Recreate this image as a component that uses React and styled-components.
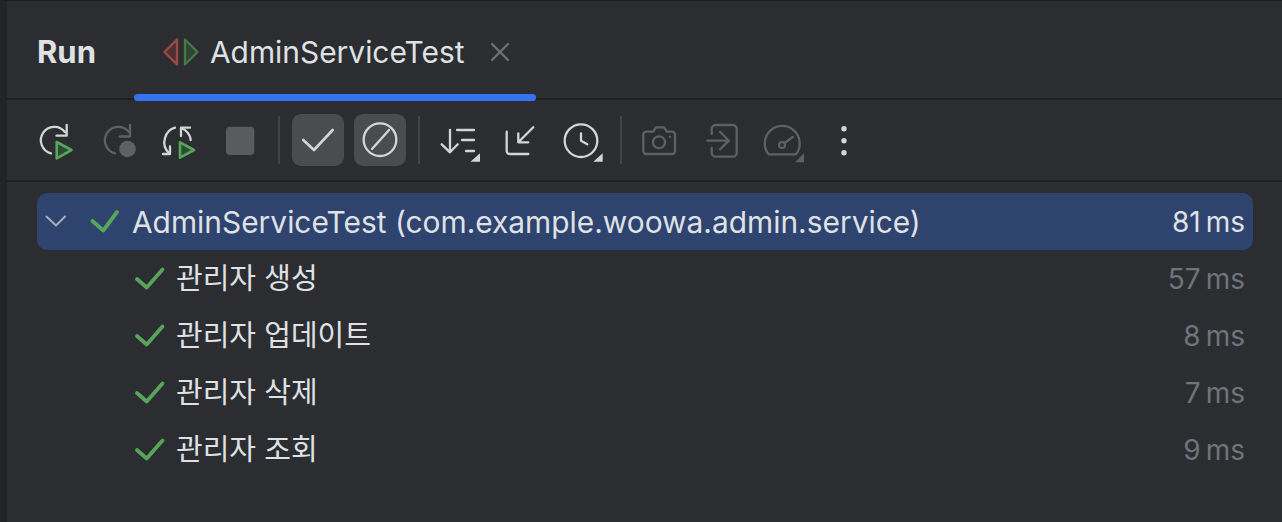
import styled, { createGlobalStyle } from 'styled-components';

const Global = createGlobalStyle`
  html, body { margin: 0; padding: 0; background: #2b2d30; }
`

const Panel = styled.div`
  width: 1282px;
  height: 522px;
  box-sizing: border-box;
  overflow: hidden;
  background: #2b2d30;
  border-left: 7px solid #232427;
  border-top: 1px solid #1e1f22;
  font-family: Inter, "Noto Sans CJK KR", sans-serif;
  color: #dfe1e5;
`

const TabBar = styled.div`
  display: flex;
  height: 99px;
  box-sizing: border-box;
  padding-left: 30px;
  border-bottom: 2px solid #1e1f22;
`

const RunLabel = styled.div`
  width: 97px;
  font-size: 31px;
  font-weight: 700;
  line-height: 102px;
`

const Tab = styled.div`
  position: relative;
  display: flex;
  align-items: center;
  width: 402px;
  height: 102px;
`

const TabTitle = styled.span`
  font-size: 29.9px;
  width: 253px;
  white-space: nowrap;
`

const TabLine = styled.div`
  position: absolute;
  left: 0;
  right: 0;
  top: 93px;
  height: 7px;
  border-radius: 4px;
  background: #3574f0;
`

const Toolbar = styled.div`
  display: flex;
  align-items: center;
  height: 82px;
  box-sizing: border-box;
  padding-left: 26px;
  border-bottom: 2px solid #1e1f22;
`

const Divider = styled.div`
  width: 2px;
  height: 48px;
  background: #414345;
`

const ToggleRow = styled.div`
  display: flex;
  gap: 10px;
  margin: 0 12px;
`

const Toggle = styled.div`
  display: flex;
  width: 52px;
  height: 52px;
  border-radius: 9px;
  background: #4b4c50;
`

const Tree = styled.div`
  display: flex;
  flex-direction: column;
  padding: 11px 29px 0 30px;
`

const Row = styled.div`
  display: flex;
  align-items: center;
  height: 57px;
  border-radius: 10px;
  background: ${p => p.$selected ? '#2e436e' : 'transparent'};
  padding-right: 8px;
`

const RowName = styled.span`
  flex: 1;
  font-size: ${p => p.$korean ? '29px' : '29.9px'};
  line-height: 60px;
  white-space: nowrap;
`

const Duration = styled.span`
  display: flex;
  gap: 5px;
  font-size: 28px;
  line-height: 60px;
  color: ${p => p.$selected ? '#dfe1e5' : '#6f737a'};
`

const TestIndent = styled.div`
  display: flex;
  align-items: center;
  width: 139px;
  flex: none;
`

const white = '#d3d5d9'
const grey = '#5f6064'
const green = '#57a55a'

// viewBox is in page pixels, so the shapes read straight off the reference
function Icon ({ x, w, y = 100, h = 80, children }) {
  return (
    <svg width={w} height={h} viewBox={`${x} ${y} ${w} ${h}`} fill="none" strokeLinecap="round" strokeLinejoin="round" style={{ display: 'block', flex: 'none' }}>
      {children}
    </svg>
  )
}

const Play = ({ d }) => <path d={d} fill="#2d4a32" stroke={green} strokeWidth="2.6" />

function Corner ({ d }) {
  return <path d={d} fill={white} stroke="none" />
}

function Rerun () {
  return (
    <Icon x={33} w={60}>
      <path d="M65 132 A13.5 13.5 0 1 0 51 153.4" stroke={white} strokeWidth="2.3" />
      <path d="M56.5 135.7H66.7V125" stroke={white} strokeWidth="2.3" />
      <Play d="M56.7 142 L71.5 150 L56.7 158.3Z" />
    </Icon>
  )
}

function RerunStopped () {
  return (
    <Icon x={93} w={60}>
      <path d="M129 132 A13.5 13.5 0 1 0 115 153.4" stroke={grey} strokeWidth="2.3" />
      <path d="M119.5 136.5H130V125" stroke={grey} strokeWidth="2.3" />
      <circle cx="127.5" cy="149" r="8.3" fill={grey} />
    </Icon>
  )
}

function RerunFailed () {
  return (
    <Icon x={153} w={60}>
      <path d="M175 127.7 C165.5 130 159.5 145 169.5 153.5" stroke={white} strokeWidth="2.3" />
      <path d="M163 154H170V146.5" stroke={white} strokeWidth="2.3" />
      <path d="M190 127.7H181V136" stroke={white} strokeWidth="2.3" />
      <path d="M181.5 128 C186 130 190 134 190.7 140" stroke={white} strokeWidth="2.3" />
      <Play d="M180 142.3 L194 150 L180 157.7Z" />
    </Icon>
  )
}

function Stop () {
  return (
    <Icon x={213} w={65}>
      <rect x="226" y="126.7" width="28.3" height="28.3" rx="4" fill="#5a5b5e" />
    </Icon>
  )
}

function SortIcon () {
  return (
    <Icon x={420} w={70}>
      <path d="M450 130V151.5M441.7 144.3L450 152.3L457.7 144.3" stroke={white} strokeWidth="2.3" />
      <path d="M457 130H474M462 140H474M466 151H474" stroke={white} strokeWidth="2.3" />
      <Corner d="M480 153.3V161.7H470.5Z" />
    </Icon>
  )
}

function CollapseIcon () {
  return (
    <Icon x={490} w={60}>
      <path d="M506.7 131.7V151A3 3 0 0 0 509.7 154H528.3" stroke={white} strokeWidth="2.3" />
      <path d="M533.3 127.3L518.3 142.3M518.3 133.3V142.3H528.3" stroke={white} strokeWidth="2.3" />
    </Icon>
  )
}

function ClockIcon () {
  return (
    <Icon x={550} w={70}>
      <circle cx="581" cy="140.7" r="16.3" stroke={white} strokeWidth="2.3" />
      <path d="M581 133.3V140.7L587.3 144.3" stroke={white} strokeWidth="2.3" />
      <Corner d="M602.7 153.3V161.7H593.3Z" />
    </Icon>
  )
}

function CameraIcon () {
  return (
    <Icon x={622} w={70}>
      <path d="M653.3 131.7L655 128.5A2 2 0 0 1 656.8 127.3H663.2A2 2 0 0 1 665 128.5L666.7 131.7H672A3 3 0 0 1 675 134.7V151A3 3 0 0 1 672 154H646.3A3 3 0 0 1 643.3 151V134.7A3 3 0 0 1 646.3 131.7Z" stroke={grey} strokeWidth="2.3" />
      <circle cx="659" cy="142.3" r="6" stroke={grey} strokeWidth="2.3" />
      <circle cx="670" cy="136.7" r="1.2" fill={grey} />
    </Icon>
  )
}

function EnterIcon () {
  return (
    <Icon x={692} w={60}>
      <path d="M711.7 134V129A4 4 0 0 1 715.7 125H732.7A4 4 0 0 1 736.7 129V152.7A4 4 0 0 1 732.7 156.7H715.7A4 4 0 0 1 711.7 152.7V148" stroke={grey} strokeWidth="2.3" />
      <path d="M707.3 140.7H728M720 131.7L729 140.7L720 149.3" stroke={grey} strokeWidth="2.3" />
    </Icon>
  )
}

function GaugeIcon () {
  return (
    <Icon x={752} w={68}>
      <path d="M768.5 154.3A17.5 17.5 0 1 1 796 154.3Z" stroke={grey} strokeWidth="2.3" />
      <circle cx="782" cy="145" r="3" stroke={grey} strokeWidth="2.2" />
      <path d="M784.5 143L792.7 137" stroke={grey} strokeWidth="2.3" />
      <path d="M804 153.3V162.3H795Z" fill={grey} />
    </Icon>
  )
}

function MoreIcon () {
  return (
    <Icon x={820} w={50}>
      <circle cx="844" cy="128.7" r="2.7" fill={white} />
      <circle cx="844" cy="140.7" r="2.7" fill={white} />
      <circle cx="844" cy="152.7" r="2.7" fill={white} />
    </Icon>
  )
}

const tests = [
  { name: '관리자 생성', ms: 57 },
  { name: '관리자 업데이트', ms: 8 },
  { name: '관리자 삭제', ms: 7 },
  { name: '관리자 조회', ms: 9 },
]

export default function App () {
  return (
    <>
      <Global />
      <Panel>
        <TabBar>
          <RunLabel>Run</RunLabel>
          <Tab>
            <svg width="76" height="40" viewBox="134 31 76 40" fill="none" style={{ flex: 'none' }}>
              <path d="M177 38.5L164.5 51L177 63.5Z" fill="#4d2f2f" stroke="#9c4a47" strokeWidth="2.4" strokeLinejoin="round" />
              <path d="M185 38.5L197.5 51L185 63.5Z" fill="#2f4433" stroke="#47764a" strokeWidth="2.4" strokeLinejoin="round" />
            </svg>
            <TabTitle>AdminServiceTest</TabTitle>
            <svg width="28" height="28" viewBox="0 0 28 28" fill="none" style={{ marginLeft: 23 }}>
              <path d="M6 6L22 22M22 6L6 22" stroke="#6f7072" strokeWidth="2.4" strokeLinecap="round" />
            </svg>
            <TabLine />
          </Tab>
        </TabBar>
        <Toolbar>
          <Rerun />
          <RerunStopped />
          <RerunFailed />
          <Stop />
          <Divider />
          <ToggleRow>
            <Toggle>
              <Icon x={292} w={52} y={115} h={52}>
                <path d="M303.3 141L314 151L332.7 131" stroke={white} strokeWidth="2.6" />
              </Icon>
            </Toggle>
            <Toggle>
              <Icon x={354} w={52} y={115} h={52}>
                <circle cx="380" cy="140.7" r="16.3" stroke={white} strokeWidth="2.3" />
                <path d="M372 150L389 131" stroke={white} strokeWidth="2.3" />
              </Icon>
            </Toggle>
          </ToggleRow>
          <Divider />
          <SortIcon />
          <CollapseIcon />
          <ClockIcon />
          <Divider />
          <CameraIcon />
          <EnterIcon />
          <GaugeIcon />
          <MoreIcon />
        </Toolbar>
        <Tree>
          <Row $selected>
            <svg width="95" height="40" viewBox="37 203 95 40" fill="none" style={{ flex: 'none' }}>
              <path d="M46.5 217.5L56 226.5L65 217.5" stroke="#a9adb5" strokeWidth="2" strokeLinecap="round" strokeLinejoin="round" />
              <path d="M92.5 222L103.3 231.5L117 213" stroke={green} strokeWidth="3.8" strokeLinecap="round" strokeLinejoin="round" />
            </svg>
            <RowName>AdminServiceTest (com.example.woowa.admin.service)</RowName>
            <Duration $selected><span>81</span><span>ms</span></Duration>
          </Row>
          {tests.map(test => (
            <Row key={test.name}>
              <TestIndent>
                <svg width="139" height="40" viewBox="37 0 139 40" fill="none" style={{ flex: 'none' }}>
                  <path d="M137 20L146.7 28.5L162.5 10.5" stroke={green} strokeWidth="3.8" strokeLinecap="round" strokeLinejoin="round" />
                </svg>
              </TestIndent>
              <RowName $korean>{test.name}</RowName>
              <Duration><span>{test.ms}</span><span>ms</span></Duration>
            </Row>
          ))}
        </Tree>
      </Panel>
    </>
  )
}
